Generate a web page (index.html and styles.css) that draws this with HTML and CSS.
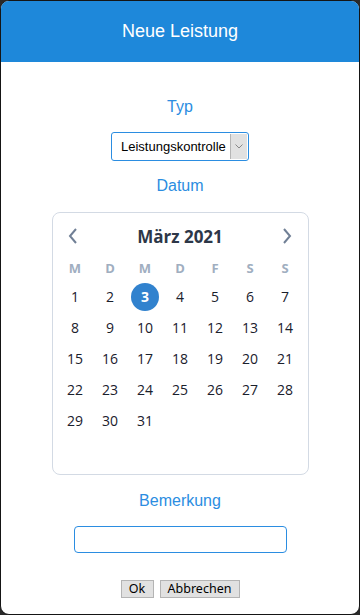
FILE: index.html
```html
<!DOCTYPE html>
<html lang="de">
<head>
<meta charset="utf-8">
<link rel="stylesheet" href="styles.css">
</head>
<body>
<div class="dialog">
  <div class="header">Neue Leistung</div>
  <div class="content">
    <div class="label label-typ">Typ</div>
    <div class="select">
      <span class="select-text">Leistungskontrolle</span>
      <span class="select-btn">
        <svg width="8" height="5" viewBox="0 0 8 5"><path d="M0.5 0.5 L4 4 L7.5 0.5" fill="none" stroke="#888" stroke-width="1"/></svg>
      </span>
    </div>
    <div class="label label-datum">Datum</div>
    <div class="calendar">
      <div class="cal-head">
        <span class="nav">
          <svg width="10" height="16" viewBox="0 0 10 16"><path d="M8 1 L2 8 L8 15" fill="none" stroke="#718096" stroke-width="2"/></svg>
        </span>
        <span class="month">März 2021</span>
        <span class="nav">
          <svg width="10" height="16" viewBox="0 0 10 16"><path d="M2 1 L8 8 L2 15" fill="none" stroke="#718096" stroke-width="2"/></svg>
        </span>
      </div>
      <div class="grid weekdays">
        <span>M</span><span>D</span><span>M</span><span>D</span><span>F</span><span>S</span><span>S</span>
      </div>
      <div class="grid days">
        <span>1</span><span>2</span><span class="sel"><b>3</b></span><span>4</span><span>5</span><span>6</span><span>7</span>
        <span>8</span><span>9</span><span>10</span><span>11</span><span>12</span><span>13</span><span>14</span>
        <span>15</span><span>16</span><span>17</span><span>18</span><span>19</span><span>20</span><span>21</span>
        <span>22</span><span>23</span><span>24</span><span>25</span><span>26</span><span>27</span><span>28</span>
        <span>29</span><span>30</span><span>31</span><span></span><span></span><span></span><span></span>
        <span></span><span></span><span></span><span></span><span></span><span></span><span></span>
      </div>
    </div>
    <div class="label label-bem">Bemerkung</div>
    <div class="input"></div>
    <div class="buttons">
      <button class="btn btn-ok">Ok</button>
      <button class="btn btn-cancel">Abbrechen</button>
    </div>
  </div>
</div>
</body>
</html>
```
FILE: styles.css
```css
html, body {
  margin: 0;
  padding: 0;
  background: #2a2a2a;
}
.dialog {
  width: 360px;
  height: 615px;
  box-sizing: border-box;
  border: 1px solid #151515;
  border-radius: 9px;
  overflow: hidden;
  background: #fff;
  display: flex;
  flex-direction: column;
}
.header {
  height: 61px;
  background: #1e88da;
  color: #fff;
  font-family: "Liberation Sans", Arial, sans-serif;
  font-size: 18px;
  display: flex;
  align-items: center;
  justify-content: center;
}
.content {
  display: flex;
  flex-direction: column;
  align-items: center;
}
.label {
  font-family: "Liberation Sans", Arial, sans-serif;
  font-size: 16px;
  line-height: 20px;
  color: #2b8de1;
}
.label-typ { margin-top: 35px; }
.select {
  margin-top: 15px;
  width: 138px;
  height: 29px;
  box-sizing: border-box;
  border: 1px solid #2b8de1;
  border-radius: 3px;
  display: flex;
  align-items: stretch;
  font-family: "Liberation Sans", Arial, sans-serif;
  font-size: 13px;
  color: #000;
}
.select-text {
  flex: 1;
  display: flex;
  align-items: center;
  padding-left: 9px;
}
.select-btn {
  width: 16px;
  margin: 1px 1px 1px 0;
  background: #e1e1e1;
  border-left: 1px solid #b5b5b5;
  display: flex;
  align-items: center;
  justify-content: center;
}
.label-datum { margin-top: 15px; }
.calendar {
  margin-top: 16px;
  width: 257px;
  height: 263px;
  box-sizing: border-box;
  border: 1px solid #d3dae4;
  border-radius: 8px;
  padding: 5px 5px 7px 5px;
  font-family: "Open Sans", "Noto Sans", sans-serif;
}
.cal-head {
  height: 36px;
  display: flex;
  align-items: center;
  justify-content: space-between;
}
.nav {
  width: 31px;
  display: flex;
  justify-content: center;
  align-items: center;
}
.month {
  font-size: 17px;
  font-weight: 700;
  color: #2d3748;
}
.grid {
  display: grid;
  grid-template-columns: repeat(7, 35px);
  justify-items: center;
  align-items: center;
}
.weekdays {
  height: 27px;
  font-size: 13px;
  font-weight: 700;
  color: #a0aec0;
}
.days {
  grid-auto-rows: 31px;
  font-size: 14px;
  color: #1a202c;
}
.days span {
  display: flex;
  align-items: center;
  justify-content: center;
}
.days .sel {
  width: 28px;
  height: 28px;
  border-radius: 50%;
  background: #3182ce;
  color: #fff;
}
.label-bem { margin-top: 16px; }
.input {
  margin-top: 15px;
  width: 213px;
  height: 27px;
  box-sizing: border-box;
  border: 1px solid #2b8de1;
  border-radius: 4px;
}
.buttons {
  margin-top: 27px;
  display: flex;
  gap: 6px;
}
.btn {
  height: 18px;
  box-sizing: border-box;
  border: 1px solid #b4b4b4;
  background: #e1e1e1;
  font-family: "Noto Sans", "Open Sans", sans-serif;
  font-size: 12.5px;
  line-height: 14px;
  color: #000;
  padding: 0;
  margin: 0;
}
.btn-ok { width: 33px; }
.btn-cancel { width: 80px; }
```
